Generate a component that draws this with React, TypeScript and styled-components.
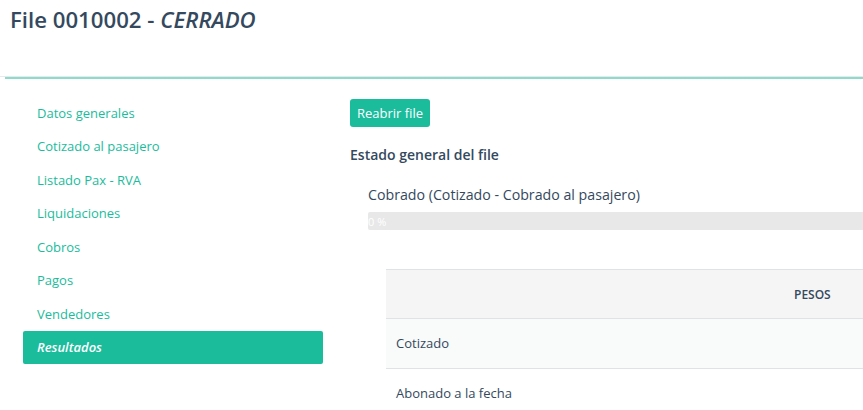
import styled, { createGlobalStyle } from "styled-components"

const GlobalStyle = createGlobalStyle`
  html, body {
    margin: 0;
    padding: 0;
    overflow: hidden;
    background: #fff;
  }
  body {
    font-family: "Open Sans", "Noto Sans", sans-serif;
    color: #34495e;
  }
`

const navItems = [
  "Datos generales",
  "Cotizado al pasajero",
  "Listado Pax - RVA",
  "Liquidaciones",
  "Cobros",
  "Pagos",
  "Vendedores",
  "Resultados",
]

const rows = [
  { label: "Cotizado", striped: true },
  { label: "Abonado a la fecha", striped: false },
]

export default function App() {
  return (
    <>
      <GlobalStyle />
      <Page>
        <Header>
          <Title>
            File 0010002 - <em>CERRADO</em>
          </Title>
        </Header>
        <Divider />
        <Body>
          <Sidebar>
            {navItems.map((item) => (
              <NavItem key={item} $active={item === "Resultados"}>
                {item}
              </NavItem>
            ))}
          </Sidebar>
          <Main>
            <ReopenButton>Reabrir file</ReopenButton>
            <SectionTitle>Estado general del file</SectionTitle>
            <Status>
              <StatusLabel>Cobrado (Cotizado - Cobrado al pasajero)</StatusLabel>
              <Progress>
                <ProgressText>0 %</ProgressText>
              </Progress>
            </Status>
            <Table>
              <HeadRow>
                <Cell />
                <HeadCell>Pesos</HeadCell>
              </HeadRow>
              {rows.map((row) => (
                <Row key={row.label} $striped={row.striped}>
                  <Cell>{row.label}</Cell>
                  <Cell />
                </Row>
              ))}
            </Table>
          </Main>
        </Body>
      </Page>
    </>
  )
}

const Page = styled.div`
  width: 863px;
  height: 410px;
  overflow: hidden;
`

const Header = styled.div`
  height: 76px;
  padding-left: 10px;
  border-bottom: 1px solid #e6e9ed;
`

const Title = styled.h1`
  margin: 0;
  padding-top: 5px;
  font-size: 22.2px;
  font-weight: 600;
  line-height: 30px;
  color: #34495e;

  em {
    font-style: italic;
  }
`

const Divider = styled.div`
  height: 2px;
  margin-left: 5px;
  background: #8fdbc9;
`

const Body = styled.div`
  display: flex;
  gap: 27px;
  padding-left: 23px;
  padding-top: 17px;
`

const Sidebar = styled.nav`
  display: flex;
  flex-direction: column;
  width: 300px;
  flex-shrink: 0;
`

const NavItem = styled.div<{ $active?: boolean }>`
  height: 33.5px;
  display: flex;
  align-items: center;
  padding-left: 14px;
  font-size: 13px;
  border-radius: 2px;
  color: ${(p) => (p.$active ? "#fff" : "#1abc9c")};
  background: ${(p) => (p.$active ? "#1abc9c" : "transparent")};
  font-style: ${(p) => (p.$active ? "italic" : "normal")};
  font-weight: ${(p) => (p.$active ? 600 : 400)};
`

const Main = styled.div`
  display: flex;
  flex-direction: column;
  align-items: flex-start;
  flex: 1;
  min-width: 0;
  padding-top: 1px;
`

const ReopenButton = styled.button`
  margin-top: 2px;
  height: 28px;
  width: 80px;
  padding: 0;
  border: none;
  border-radius: 3px;
  background: #1abc9c;
  color: #fff;
  font-family: "Open Sans", "Noto Sans", sans-serif;
  font-size: 13px;
`

const SectionTitle = styled.h3`
  margin: 18px 0 0;
  font-size: 14px;
  font-weight: 600;
  line-height: 20px;
  color: #34495e;
`

const Status = styled.div`
  align-self: stretch;
  margin-top: 20px;
  padding-left: 18px;
`

const StatusLabel = styled.div`
  font-size: 14.2px;
  line-height: 20px;
  color: #34495e;
`

const Progress = styled.div`
  margin-top: 7px;
  height: 18px;
  margin-right: -10px;
  background: #e8e8e8;
  border-radius: 2px;
  display: flex;
  align-items: center;
`

const ProgressText = styled.span`
  font-size: 11px;
  color: #fff;
`

const Table = styled.div`
  margin-top: 39px;
  margin-left: 36px;
  width: 700px;
  border-top: 1px solid #e0e3e6;
`

const HeadRow = styled.div`
  display: grid;
  grid-template-columns: 398px 1fr;
  height: 48px;
  background: #f5f5f5;
  border-bottom: 1px solid #e0e3e6;
  align-items: center;
`

const Row = styled.div<{ $striped?: boolean }>`
  display: grid;
  grid-template-columns: 398px 1fr;
  height: 50px;
  padding-bottom: 2px;
  box-sizing: border-box;
  align-items: center;
  background: ${(p) => (p.$striped ? "#f9fafa" : "#fff")};
  border-bottom: 1px solid #e0e3e6;
`

const Cell = styled.div`
  padding-left: 10px;
  font-size: 13px;
  color: #34495e;
`

const HeadCell = styled(Cell)`
  font-size: 12px;
  font-weight: 600;
  text-transform: uppercase;
`
